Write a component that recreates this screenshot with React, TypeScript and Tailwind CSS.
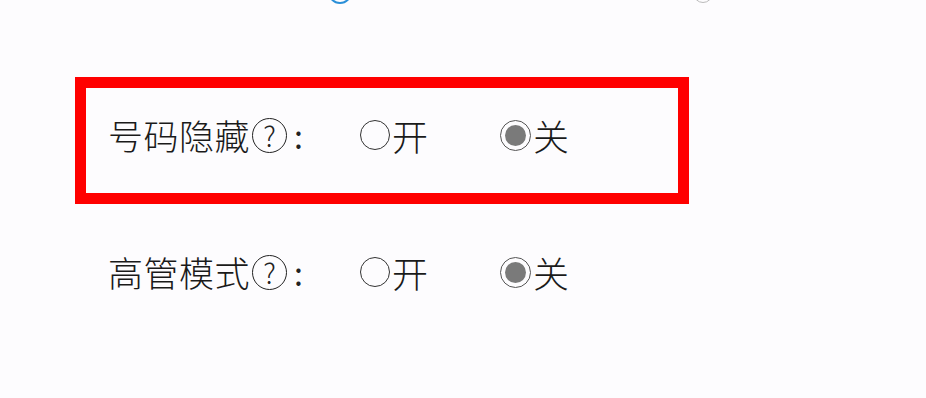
import React from 'react'

const FONT = { fontFamily: '"Noto Sans CJK SC", "Noto Sans", sans-serif' }

function Radio({ checked, label }: { checked: boolean; label: string }) {
  return (
    <div className="flex items-center">
      {checked ? (
        <span className="shrink-0 w-[31px] h-[31px] rounded-full border-[1.5px] border-[#555] flex items-center justify-center">
          <span className="w-[21px] h-[21px] rounded-full bg-[#7a7a7a]" />
        </span>
      ) : (
        <span className="shrink-0 w-[30px] h-[30px] rounded-full border-[1.5px] border-[#333]" />
      )}
      <span className="ml-[2px] text-[36px] leading-[40px] font-light text-[#1a1a1a]">{label}</span>
    </div>
  )
}

function SettingRow({ label }: { label: string }) {
  return (
    <div className="flex items-center h-[40px]">
      <div className="shrink-0 w-[252px] flex items-center">
        <span className="text-[35px] leading-[40px] font-light text-[#1a1a1a] tracking-[0.5px]">{label}</span>
        <span className="shrink-0 ml-[2px] w-[35px] h-[35px] rounded-full border-[1.5px] border-[#222] flex items-center justify-center text-[28px] leading-none font-light text-[#222]">
          ?
        </span>
        <span className="ml-[7px] text-[32px] leading-[40px] font-normal text-[#222]">:</span>
      </div>
      <div className="shrink-0 w-[140px]">
        <Radio checked={false} label="开" />
      </div>
      <Radio checked={true} label="关" />
    </div>
  )
}

export default function App() {
  return (
    <div className="w-[926px] h-[398px] bg-[#fdfcfe] overflow-hidden" style={FONT}>
      {/* cut-off controls at the top */}
      <div className="h-[4px] overflow-hidden flex">
        <span className="shrink-0 ml-[328px] -mt-[20px] w-[24px] h-[24px] rounded-full border-[2px] border-[#2a8fd8]" />
        <span className="shrink-0 ml-[341px] -mt-[21px] w-[20px] h-[24px] rounded-full border border-[#bbb]" />
      </div>

      <div className="ml-[75px] mt-[73px] w-[614px] h-[127px] border-[11px] border-[#ff0000] pl-[22px] pt-[27px]">
        <SettingRow label="号码隐藏" />
      </div>

      <div className="pl-[108px] mt-[48px]">
        <SettingRow label="高管模式" />
      </div>
    </div>
  )
}
